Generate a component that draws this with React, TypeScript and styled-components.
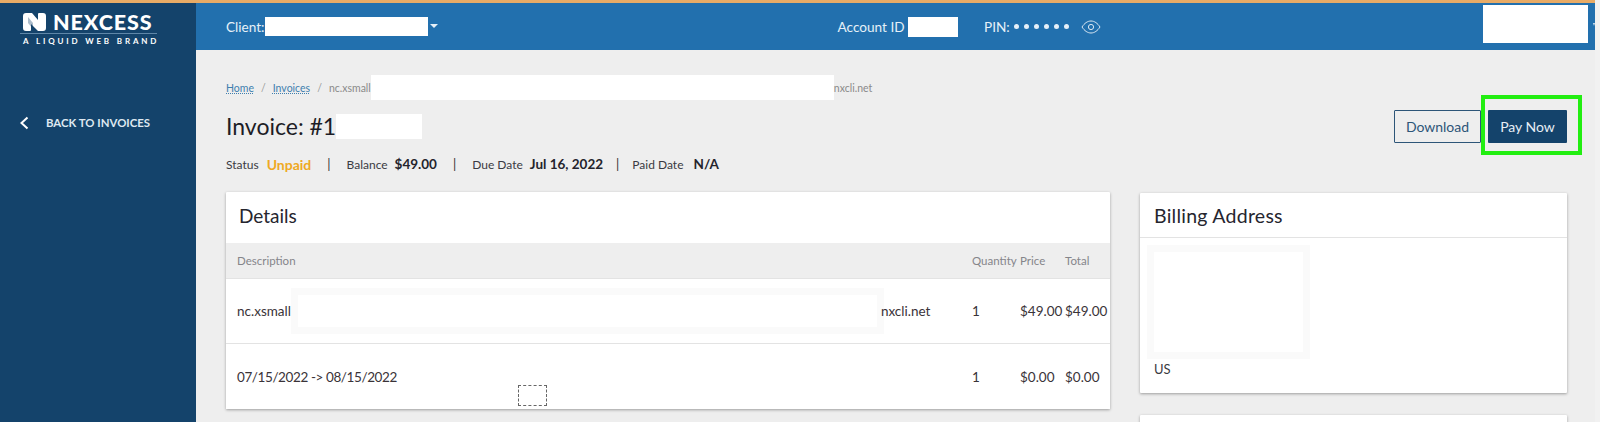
import React from "react";
import styled, { createGlobalStyle } from "styled-components";

const Global = createGlobalStyle`
  html, body { margin: 0; padding: 0; height: 422px; overflow: hidden; background: #eeeeee; }
  body { font-family: "Lato", "Noto Sans", "Liberation Sans", sans-serif; color: #2b2b33; }
  #root { height: 422px; }
`;

const Shell = styled.div`
  height: 422px;
  overflow: hidden;
  display: grid;
  grid-template-columns: 1fr 5px;
`;

const Scrollbar = styled.div`
  background: #f1f1f1;
`;

const Page = styled.div`
  height: 422px;
  overflow: hidden;
  display: grid;
  grid-template-columns: 196px 1fr;
  grid-template-rows: 47px 1fr;
  border-top: 3px solid #e8ab66;
  box-sizing: border-box;
  min-width: 0;
`;

const Sidebar = styled.aside`
  grid-row: 1 / 3;
  background: #14436b;
  color: #fff;
  display: flex;
  flex-direction: column;
`;

const Logo = styled.div`
  width: 137px;
  margin: 10px 0 0 20px;
`;

const LogoTop = styled.div`
  display: flex;
  align-items: center;
  gap: 7px;
  height: 18px;
  padding: 0 0 2px 3px;
  border-bottom: 1px solid #5f87a8;
`;

const LogoWord = styled.span`
  font-size: 21.5px;
  line-height: 20px;
  font-weight: 900;
  letter-spacing: 0.9px;
  white-space: nowrap;
`;

const LogoSub = styled.div`
  font-size: 8px;
  line-height: 11px;
  font-weight: 700;
  letter-spacing: 2.85px;
  margin: 2px 0 0 3px;
  white-space: nowrap;
`;

const BackLink = styled.a`
  display: flex;
  align-items: center;
  gap: 17px;
  margin: 68px 0 0 19px;
  font-size: 11.4px;
  line-height: 16px;
  font-weight: 700;
  color: #dfe8f0;
  white-space: nowrap;
`;

const TopBar = styled.header`
  background: #2270ae;
  color: #e6f0f8;
  display: flex;
  align-items: center;
  padding-left: 30px;
  font-size: 13.6px;
`;

const Redaction = styled.span<{ $w: number; $h: number; $halo?: boolean }>`
  display: inline-block;
  flex: none;
  width: ${(p) => p.$w}px;
  height: ${(p) => p.$h}px;
  background: #fff;
  vertical-align: middle;
  box-shadow: ${(p) => (p.$halo ? "0 0 0 7px #fafafa" : "none")};
`;

const TopGroup = styled.div<{ $left?: number }>`
  display: flex;
  align-items: center;
  margin-left: ${(p) => p.$left ?? 0}px;
`;

const Caret = styled.span`
  width: 0;
  height: 0;
  margin: -1px 0 0 2px;
  border-left: 4px solid transparent;
  border-right: 4px solid transparent;
  border-top: 4px solid #e6f0f8;
`;

const Dots = styled.span`
  display: flex;
  gap: 5px;
  margin: 0 12px 0 4px;
`;

const Dot = styled.i`
  width: 5px;
  height: 5px;
  border-radius: 50%;
  background: #e6f0f8;
`;

const UserBlock = styled.div`
  margin-left: auto;
  display: flex;
  align-items: center;
  align-self: flex-start;
  gap: 5px;
  margin-top: 2px;
`;

const SmallCaret = styled.span`
  width: 0;
  height: 0;
  border-left: 1.5px solid transparent;
  border-right: 1.5px solid transparent;
  border-top: 3px solid #d8e6f1;
`;

const Content = styled.main`
  padding: 25px 28px 0 30px;
  min-width: 0;
  overflow: hidden;
`;

const HeaderRow = styled.div`
  display: flex;
  justify-content: space-between;
  align-items: flex-start;
  height: 117px;
`;

const Crumbs = styled.nav`
  display: flex;
  align-items: center;
  height: 25px;
  font-size: 10.5px;
  color: #8a8a8a;
  white-space: nowrap;
`;

const CrumbLink = styled.a`
  color: #3f7fae;
  text-decoration: underline dotted;
`;

const CrumbSep = styled.span`
  margin: 0 7px;
  color: #999;
`;

const Title = styled.h1`
  display: flex;
  align-items: center;
  height: 26px;
  margin: 13px 0 0;
  font-size: 23px;
  font-weight: 400;
  color: #1d1d26;
`;

const Status = styled.div`
  display: flex;
  align-items: center;
  height: 20px;
  margin-top: 15px;
  font-size: 12px;
  color: #3a3a42;
  white-space: nowrap;
`;

const Value = styled.b<{ $orange?: boolean; $gap?: number }>`
  margin-left: ${(p) => p.$gap ?? 7}px;
  font-size: ${(p) => (p.$orange ? 14 : 13.5)}px;
  font-weight: 700;
  color: ${(p) => (p.$orange ? "#efa922" : "#24242c")};
`;

const Pipe = styled.span<{ $gap?: number }>`
  margin: 0 ${(p) => p.$gap ?? 16}px;
  font-size: 13px;
  color: #333;
`;

const Actions = styled.div`
  display: flex;
  align-items: center;
  gap: 7px;
  margin-top: 35px;
`;

const OutlineButton = styled.button`
  width: 87px;
  height: 33px;
  padding: 0;
  background: transparent;
  border: 1px solid #2d5578;
  border-radius: 1px;
  color: #2d5578;
  font: 400 14px "Lato", "Noto Sans", sans-serif;
`;

const PrimaryButton = styled.button`
  position: relative;
  width: 79px;
  height: 33px;
  padding: 0;
  background: #14436b;
  border: 0;
  border-radius: 1px;
  color: #e6eef5;
  font: 400 14px "Lato", "Noto Sans", sans-serif;
`;

const Highlight = styled.span`
  position: absolute;
  left: -7px;
  top: -15px;
  width: 93px;
  height: 52px;
  border: 4px solid #22ee11;
  pointer-events: none;
`;

const Columns = styled.div`
  display: grid;
  grid-template-columns: 884px 427px;
  justify-content: space-between;
  align-items: start;
`;

const Stack = styled.div`
  display: flex;
  flex-direction: column;
  gap: 22px;
  padding-top: 1px;
`;

const Card = styled.section`
  position: relative;
  background: #fff;
  box-shadow: 0 1px 3px rgba(0, 0, 0, 0.35);
  border-radius: 1px;
`;

const DetailsTitle = styled.h2`
  display: flex;
  align-items: center;
  box-sizing: border-box;
  height: 51px;
  margin: 0;
  padding: 0 0 4px 13px;
  font-size: 19px;
  font-weight: 400;
  color: #25252e;
`;

const Row = styled.div<{ $head?: boolean; $height?: number }>`
  display: grid;
  grid-template-columns: 746px 48px 45px 1fr;
  align-items: center;
  box-sizing: border-box;
  height: ${(p) => p.$height ?? 65}px;
  background: ${(p) => (p.$head ? "#eeeeee" : "#fff")};
  color: ${(p) => (p.$head ? "#85858a" : "#3a3338")};
  font-size: ${(p) => (p.$head ? 11.5 : 13.5)}px;
  white-space: nowrap;
  & + & {
    border-top: 1px solid #e3e3e3;
  }
`;

const DescCell = styled.div`
  display: flex;
  align-items: center;
  padding-left: 11px;
`;

const DateRange = styled.span`
  letter-spacing: -0.4px;
`;

const GapRedaction = styled.span`
  margin: 0 4px 0 7px;
  display: flex;
`;

const FocusBox = styled.span`
  position: absolute;
  left: 292px;
  top: 193px;
  width: 27px;
  height: 19px;
  border: 1px dashed #666;
`;

const BillingHead = styled.h2`
  display: flex;
  align-items: center;
  height: 44px;
  margin: 0;
  padding-left: 14px;
  font-size: 19.5px;
  letter-spacing: 0.25px;
  font-weight: 400;
  color: #25252e;
  border-bottom: 1px solid #e3e3e3;
`;

const BillingBody = styled.div`
  height: 155px;
  padding: 14px 0 0 14px;
  box-sizing: border-box;
  font-size: 13px;
  color: #3a3a42;
`;

const Country = styled.div`
  margin-top: 9px;
  line-height: 16px;
`;

const EmptyCard = styled(Card)`
  height: 40px;
`;

const LogoMark = () => (
  <svg width="23" height="18" viewBox="0 0 23 18" aria-hidden="true" style={{ flex: "none" }}>
    <path
      d="M3 0h6l6 7V1a1 1 0 0 1 1-1h4a3 3 0 0 1 3 3v12a3 3 0 0 1-3 3h-5l-7-7v6a1 1 0 0 1-1 1H3a3 3 0 0 1-3-3V3a3 3 0 0 1 3-3z"
      fill="#fff"
    />
    <path d="M5 4l5 6v6l-5-6z" fill="#14436b" opacity="0.35" />
  </svg>
);

const Chevron = () => (
  <svg width="10" height="14" viewBox="0 0 10 14" aria-hidden="true" style={{ flex: "none" }}>
    <path d="M8.500 1.500 2.500 7l6 5.500" fill="none" stroke="#fff" strokeWidth="2" />
  </svg>
);

const Eye = () => (
  <svg width="20" height="14" viewBox="0 0 20 14" aria-hidden="true" style={{ flex: "none" }}>
    <path
      d="M1 7c2.500-3.800 5.500-6 9-6s6.500 2.200 9 6c-2.500 3.800-5.500 6-9 6s-6.500-2.200-9-6z"
      fill="none"
      stroke="#dbe8f3"
      strokeWidth="1"
    />
    <circle cx="10" cy="7" r="2.600" fill="none" stroke="#dbe8f3" strokeWidth="1" />
  </svg>
);

export default function App() {
  return (
    <>
      <Global />
      <Shell>
        <Page>
          <Sidebar>
            <Logo>
              <LogoTop>
                <LogoMark />
                <LogoWord>NEXCESS</LogoWord>
              </LogoTop>
              <LogoSub>A LIQUID WEB BRAND</LogoSub>
            </Logo>
            <BackLink>
              <Chevron />
              BACK TO INVOICES
            </BackLink>
          </Sidebar>
          <TopBar>
            <TopGroup>
              Client:
              <Redaction $w={163} $h={19} />
              <Caret />
            </TopGroup>
            <TopGroup $left={400}>
              Account ID&nbsp;
              <Redaction $w={50} $h={20} />
            </TopGroup>
            <TopGroup $left={26}>
              PIN:
              <Dots>
                {[0, 1, 2, 3, 4, 5].map((i) => (
                  <Dot key={i} />
                ))}
              </Dots>
              <Eye />
            </TopGroup>
            <UserBlock>
              <Redaction $w={105} $h={38} />
              <SmallCaret />
            </UserBlock>
          </TopBar>
          <Content>
            <HeaderRow>
              <div>
                <Crumbs>
                  <CrumbLink>Home</CrumbLink>
                  <CrumbSep>/</CrumbSep>
                  <CrumbLink>Invoices</CrumbLink>
                  <CrumbSep>/</CrumbSep>
                  nc.xsmall
                  <Redaction $w={463} $h={25} />
                  nxcli.net
                </Crumbs>
                <Title>
                  Invoice: #1
                  <Redaction $w={86} $h={25} />
                </Title>
                <Status>
                  Status
                  <Value $orange $gap={8}>Unpaid</Value>
                  <Pipe>|</Pipe>
                  Balance
                  <Value>$49.00</Value>
                  <Pipe>|</Pipe>
                  Due Date
                  <Value>Jul 16, 2022</Value>
                  <Pipe $gap={13}>|</Pipe>
                  Paid Date
                  <Value $gap={10}>N/A</Value>
                </Status>
              </div>
              <Actions>
                <OutlineButton>Download</OutlineButton>
                <PrimaryButton>
                  Pay Now
                  <Highlight />
                </PrimaryButton>
              </Actions>
            </HeaderRow>
            <Columns>
              <Card>
                <DetailsTitle>Details</DetailsTitle>
                <Row $head $height={35}>
                  <DescCell>Description</DescCell>
                  <span>Quantity</span>
                  <span>Price</span>
                  <span>Total</span>
                </Row>
                <Row>
                  <DescCell>
                    nc.xsmall
                    <GapRedaction>
                      <Redaction $w={579} $h={32} $halo />
                    </GapRedaction>
                    nxcli.net
                  </DescCell>
                  <span>1</span>
                  <span>$49.00</span>
                  <span>$49.00</span>
                </Row>
                <Row $height={66}>
                  <DescCell>
                    <DateRange>07/15/2022 -&gt; 08/15/2022</DateRange>
                  </DescCell>
                  <span>1</span>
                  <span>$0.00</span>
                  <span>$0.00</span>
                </Row>
                <FocusBox />
              </Card>
              <Stack>
                <Card>
                  <BillingHead>Billing Address</BillingHead>
                  <BillingBody>
                    <Redaction $w={149} $h={100} $halo />
                    <Country>US</Country>
                  </BillingBody>
                </Card>
                <EmptyCard />
              </Stack>
            </Columns>
          </Content>
        </Page>
        <Scrollbar />
      </Shell>
    </>
  );
}
